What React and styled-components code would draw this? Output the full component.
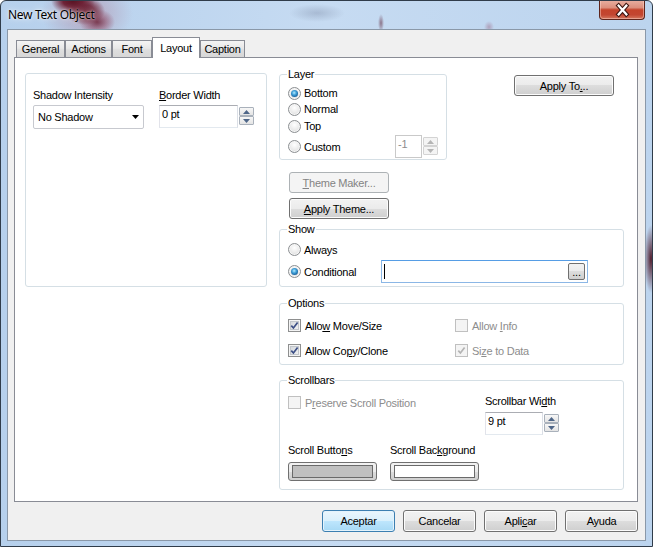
import React from 'react';
import styled, { createGlobalStyle, css } from 'styled-components';

const Global = createGlobalStyle`
  html, body { margin: 0; padding: 0; }
  body {
    width: 653px;
    height: 547px;
    overflow: hidden;
    font-family: "Liberation Sans", Arial, sans-serif;
    font-size: 11px;
    letter-spacing: -0.25px;
    color: #000;
  }
  * { box-sizing: border-box; }
`;

const tabs = [
    { label: 'General', w: 49 },
    { label: 'Actions', w: 47 },
    { label: 'Font', w: 40 },
    { label: 'Layout', w: 48 },
    { label: 'Caption', w: 45 },
];

function Spin({ value, width, disabled }) {
    return (
        <SpinBox>
            <SpinEdit $w={width} $disabled={disabled}>{value}</SpinEdit>
            <SpinButtons>
                <SpinButton $disabled={disabled}>
                    <svg width="7" height="4" viewBox="0 0 7 4"><polygon points="0,4 3.5,0 7,4" /></svg>
                </SpinButton>
                <SpinButton $disabled={disabled}>
                    <svg width="7" height="4" viewBox="0 0 7 4"><polygon points="0,0 7,0 3.5,4" /></svg>
                </SpinButton>
            </SpinButtons>
        </SpinBox>
    );
}

function Check({ checked, disabled, children }) {
    return (
        <Option $h={17}>
            <CheckBox $disabled={disabled}>
                {checked && (
                    <svg width="11" height="11" viewBox="0 0 11 11">
                        <path d="M2.3 5.6 L4.4 8 L8.6 2.4" fill="none" strokeWidth="1.7" stroke={disabled ? '#b4b4b4' : '#3c4f86'} />
                    </svg>
                )}
            </CheckBox>
            <OptionText $disabled={disabled}>{children}</OptionText>
        </Option>
    );
}

export default function App() {
    return (
        <>
            <Global />
            <Window>
                <TitleBar>
                    <Title>New Text Object</Title>
                    <CloseButton aria-label="Close">
                        <svg width="46" height="20" viewBox="0 0 46 20">
                            <path d="M19.5 5.5 L27.5 14.5 M27.5 5.5 L19.5 14.5" stroke="#3d1611" strokeWidth="4.6" strokeLinecap="square" fill="none" />
                            <path d="M19.5 5.5 L27.5 14.5 M27.5 5.5 L19.5 14.5" stroke="#fff" strokeWidth="2.4" strokeLinecap="square" fill="none" />
                        </svg>
                    </CloseButton>
                </TitleBar>
                <Client>
                    <TabStrip>
                        {tabs.map((t) => (
                            <Tab key={t.label} $w={t.w} $active={t.label === 'Layout'}>{t.label}</Tab>
                        ))}
                    </TabStrip>
                    <Page>
                        <PlainGroup>
                            <FieldRow>
                                <Field>
                                    <FieldLabel>Shadow Intensity</FieldLabel>
                                    <Combo>
                                        No Shadow
                                        <svg width="7" height="4" viewBox="0 0 7 4"><polygon points="0,0 7,0 3.5,4" fill="#000" /></svg>
                                    </Combo>
                                </Field>
                                <Field>
                                    <FieldLabel><Key>B</Key>order Width</FieldLabel>
                                    <Spin value="0 pt" width={79} />
                                </Field>
                            </FieldRow>
                        </PlainGroup>

                        <RightColumn>
                            <TopRow>
                                <Group $w={168} $pt={4} $pb={1}>
                                    <Legend>Layer</Legend>
                                    <Option $h={16}><Radio $checked />Bottom</Option>
                                    <Option $h={16}><Radio />Normal</Option>
                                    <Option $h={18}><Radio />Top</Option>
                                    <Option $h={23}>
                                        <OptionLabel $w={107}><Radio />Custom</OptionLabel>
                                        <Spin value="-1" width={27} disabled />
                                    </Option>
                                </Group>
                                <ApplyTo>Apply To<Key>.</Key>..</ApplyTo>
                            </TopRow>

                            <ThemeButtons>
                                <Button $w={100} $h={21} disabled><Key>T</Key>heme Maker...</Button>
                                <Button $w={100} $h={21}><Key>A</Key>pply Theme...</Button>
                            </ThemeButtons>

                            <Group $mt={4} $pt={5} $pb={3}>
                                <Legend>Show</Legend>
                                <Option $h={17}><Radio />Always</Option>
                                <Option $h={23} $mt={2}>
                                    <OptionLabel $w={93}><Radio $checked />Conditional</OptionLabel>
                                    <ExprEdit>
                                        <Caret />
                                        <Ellipsis>...</Ellipsis>
                                    </ExprEdit>
                                </Option>
                            </Group>

                            <Group $mt={10} $pt={7} $pb={5}>
                                <Legend>Options</Legend>
                                <OptionsGrid>
                                    <Check checked>Allo<Key>w</Key> Move/Size</Check>
                                    <Check disabled>Allow <Key>I</Key>nfo</Check>
                                    <Check checked>Allow Co<Key>p</Key>y/Clone</Check>
                                    <Check checked disabled>Si<Key>z</Key>e to Data</Check>
                                </OptionsGrid>
                            </Group>

                            <Group $mt={9} $pt={7} $pb={8}>
                                <Legend>Scrollbars</Legend>
                                <ScrollTop>
                                    <Check disabled>P<Key>r</Key>eserve Scroll Position</Check>
                                    <Field>
                                        <FieldLabel $lh={15}>Scrollbar Wi<Key>d</Key>th</FieldLabel>
                                        <Spin value="9 pt" width={58} />
                                    </Field>
                                </ScrollTop>
                                <ScrollColors>
                                    <Field>
                                        <FieldLabel $gap={5}>Scroll Butto<Key>n</Key>s</FieldLabel>
                                        <Swatch><SwatchFill $color="#c0c0c0" /></Swatch>
                                    </Field>
                                    <Field>
                                        <FieldLabel $gap={5}>Scroll Bac<Key>k</Key>ground</FieldLabel>
                                        <Swatch><SwatchFill $color="#ffffff" /></Swatch>
                                    </Field>
                                </ScrollColors>
                            </Group>
                        </RightColumn>
                    </Page>

                    <Footer>
                        <Button $default>Aceptar</Button>
                        <Button>Cancelar</Button>
                        <Button>Apli<Key>c</Key>ar</Button>
                        <Button>Ayuda</Button>
                    </Footer>
                </Client>
            </Window>
        </>
    );
}

const Window = styled.div`
    width: 653px;
    height: 547px;
    display: flex;
    flex-direction: column;
    border: 1px solid #303c4a;
    border-radius: 6px 6px 0 0;
    overflow: hidden;
    background:
        radial-gradient(ellipse 22px 14px at 72px 0px, #5a1424 0%, #6e2236 45%, rgba(120, 45, 65, 0) 100%),
        radial-gradient(ellipse 20px 14px at 84px 10px, #6a1d31 0%, rgba(110, 35, 55, 0.85) 45%, rgba(140, 60, 85, 0) 100%),
        radial-gradient(ellipse 18px 13px at 96px 21px, rgba(110, 36, 58, 0.85) 0%, rgba(140, 65, 90, 0.5) 50%, rgba(160, 90, 115, 0) 100%),
        radial-gradient(ellipse 46px 34px at 86px 12px, rgba(170, 100, 125, 0.45), rgba(170, 100, 125, 0) 100%),
        radial-gradient(ellipse 28px 9px at 316px 12px, rgba(80, 90, 120, 0.25), transparent),
        radial-gradient(ellipse 3px 9px at 380px 22px, rgba(90, 30, 50, 0.55), transparent),
        radial-gradient(ellipse 5px 6px at 488px 26px, rgba(140, 60, 90, 0.35), transparent),
        radial-gradient(ellipse 7px 34px at 650px 258px, rgba(75, 20, 35, 0.95), transparent),
        linear-gradient(90deg, #b6d0ec 0%, #c6dbf2 50%, #bcd4ee 100%);
`;

const TitleBar = styled.div`
    height: 28px;
    display: flex;
    align-items: flex-start;
    justify-content: space-between;
`;

const Title = styled.div`
    padding-left: 7px;
    line-height: 28px;
    font-family: "Noto Sans", "Open Sans", sans-serif;
    font-size: 12px;
    letter-spacing: -0.3px;
    text-shadow: 0 0 6px rgba(255, 255, 255, 0.9), 0 0 2px rgba(255, 255, 255, 0.9);
`;

const CloseButton = styled.div`
    width: 46px;
    height: 20px;
    margin: -1px 7px 0 0;
    border: 1px solid #5e251c;
    border-top: none;
    border-radius: 0 0 4px 4px;
    background: linear-gradient(#e9b0a2 0%, #dc8f7d 40%, #c4432b 52%, #c24631 78%, #d4785f 100%);
    box-shadow: inset 0 0 0 1px rgba(255, 220, 210, 0.45);
    display: flex;
`;

const Client = styled.div`
    flex: 1;
    margin: 0 6px 5px 6px;
    border: 1px solid #8a98a8;
    background: #f0f0f0;
    padding: 7px 7px 0 6px;
    display: flex;
    flex-direction: column;
`;

const TabStrip = styled.div`
    height: 20px;
    display: flex;
    align-items: flex-end;
    padding-left: 2px;
    position: relative;
    z-index: 1;
`;

const Tab = styled.div`
    width: ${(p) => p.$w}px;
    height: ${(p) => (p.$active ? 21 : 17)}px;
    margin-bottom: ${(p) => (p.$active ? -1 : 0)}px;
    border: 1px solid #898c95;
    border-bottom: none;
    background: ${(p) => (p.$active ? '#fff' : 'linear-gradient(#f4f4f4, #e8e8e8 45%, #dedede 55%, #d7d7d7)')};
    display: flex;
    align-items: center;
    justify-content: center;
`;

const Page = styled.div`
    height: 445px;
    border: 1px solid #898c95;
    background: #fff;
    padding: 10px 0 0 10px;
    display: flex;
    align-items: flex-start;
    gap: 12px;
`;

const PlainGroup = styled.div`
    width: 242px;
    height: 214px;
    margin-top: 5px;
    border: 1px solid #d5dfe5;
    border-radius: 3px;
    padding: 15px 0 0 7px;
`;

const FieldRow = styled.div`
    display: flex;
    gap: 15px;
`;

const Field = styled.div`
    display: flex;
    flex-direction: column;
    align-items: flex-start;
`;

const FieldLabel = styled.div`
    line-height: ${(p) => p.$lh || 13}px;
    margin-bottom: ${(p) => p.$gap || 3}px;
    white-space: nowrap;
`;

const Key = styled.u`
    text-decoration: underline;
    text-underline-offset: 1px;
`;

const Combo = styled.div`
    width: 111px;
    height: 24px;
    border: 1px solid #c7c9cf;
    border-radius: 2px;
    background: #fff;
    padding: 0 4px 0 4px;
    display: flex;
    align-items: center;
    justify-content: space-between;
`;

const SpinBox = styled.div`
    display: flex;
    align-items: flex-start;
`;

const SpinEdit = styled.div`
    width: ${(p) => p.$w}px;
    height: 23px;
    border: 1px solid;
    border-color: #abadb3 #dbdfe6 #e3e9ef #e2e3ea;
    background: #fff;
    padding: 2px 0 0 2px;
    line-height: 13px;
    color: ${(p) => (p.$disabled ? '#8d8d8d' : '#000')};
    ${(p) => p.$disabled && css`border-color: #c9c9c9;`}
`;

const SpinButtons = styled.div`
    display: flex;
    flex-direction: column;
    margin: 2px 0 0 1px;
`;

const SpinButton = styled.div`
    width: 15px;
    height: 9px;
    border: 1px solid ${(p) => (p.$disabled ? '#d3d3d3' : '#a9b1bb')};
    border-radius: 1px;
    background: ${(p) => (p.$disabled ? '#f4f4f4' : 'linear-gradient(#f7f7f7, #e4e4e4)')};
    display: flex;
    align-items: center;
    justify-content: center;
    svg { fill: ${(p) => (p.$disabled ? '#b5b5b5' : '#4e6688')}; }
`;

const RightColumn = styled.div`
    width: 345px;
    display: flex;
    flex-direction: column;
`;

const TopRow = styled.div`
    display: flex;
    align-items: flex-start;
`;

const Group = styled.fieldset`
    margin: ${(p) => p.$mt || 0}px 0 0 0;
    width: ${(p) => (p.$w ? `${p.$w}px` : 'auto')};
    min-width: 0;
    padding: ${(p) => p.$pt}px 8px ${(p) => p.$pb}px 8px;
    border: 1px solid #d5dfe5;
    border-radius: 3px;
    display: flex;
    flex-direction: column;
`;

const Legend = styled.legend`
    padding: 0 1px;
    margin-left: -1px;
    line-height: 13px;
`;

const Option = styled.label`
    height: ${(p) => p.$h}px;
    margin-top: ${(p) => p.$mt || 0}px;
    display: flex;
    align-items: center;
    white-space: nowrap;
`;

const OptionLabel = styled.span`
    width: ${(p) => p.$w}px;
    display: flex;
    align-items: center;
`;

const OptionText = styled.span`
    color: ${(p) => (p.$disabled ? '#8d8d8d' : '#000')};
`;

const Radio = styled.span`
    position: relative;
    width: 13px;
    height: 13px;
    margin-right: 3px;
    flex: none;
    border-radius: 50%;
    border: 1px solid #8c8f92;
    background: radial-gradient(circle at 50% 35%, #ffffff 0%, #eaeaea 55%, #cfd1d3 100%);
    box-shadow: inset 0 0 0 1px #f6f6f6;
    ${(p) => p.$checked && css`
        &::after {
            content: '';
            position: absolute;
            inset: 2px;
            border-radius: 50%;
            background: radial-gradient(circle at 45% 40%, #b8ecff 0%, #45a5dc 35%, #155f9b 75%, #0e3f6c 100%);
        }
    `}
`;

const CheckBox = styled.span`
    width: 13px;
    height: 13px;
    margin-right: 4px;
    flex: none;
    border: 1px solid ${(p) => (p.$disabled ? '#c0c0c0' : '#8e8f8f')};
    background: ${(p) => (p.$disabled ? '#f4f4f4' : 'linear-gradient(135deg, #cfd3d8, #f6f6f6)')};
    box-shadow: ${(p) => (p.$disabled ? 'none' : 'inset 0 0 0 1px #f4f4f4, inset 0 0 0 2px #c2c6cb')};
    display: flex;
    align-items: center;
    justify-content: center;
`;

const Button = styled.button`
    width: ${(p) => p.$w || 73}px;
    height: ${(p) => p.$h || 22}px;
    padding: 0;
    font: inherit;
    letter-spacing: inherit;
    color: #000;
    border: 1px solid #707070;
    border-radius: 3px;
    background: linear-gradient(#f2f2f2, #ebebeb 50%, #dddddd 50%, #cfcfcf);
    box-shadow: inset 0 0 0 1px #fcfcfc;
    ${(p) => p.$default && css`
        border-color: #3c7fb1;
        background: linear-gradient(#eaf6fd, #d9f0fc 50%, #bee6fd 50%, #a7d9f5);
        box-shadow: inset 0 0 0 1px #e4f3fc;
    `}
    &:disabled {
        border-color: #adb2b5;
        background: #f4f4f4;
        color: #838383;
        box-shadow: none;
    }
`;

const ApplyTo = styled(Button).attrs({ $w: 100, $h: 21 })`
    margin: 7px 0 0 67px;
`;

const ThemeButtons = styled.div`
    display: flex;
    flex-direction: column;
    gap: 5px;
    margin-top: 12px;
    padding-left: 10px;
`;

const ExprEdit = styled.div`
    width: 207px;
    height: 23px;
    border: 1px solid #8bb7e6;
    border-top-color: #569de5;
    background: #fff;
    display: flex;
    align-items: center;
    justify-content: space-between;
    padding: 0 2px 0 2px;
`;

const Caret = styled.span`
    width: 1px;
    height: 15px;
    background: #000;
`;

const Ellipsis = styled.span`
    width: 17px;
    height: 17px;
    border: 1px solid #707070;
    border-radius: 2px;
    background: linear-gradient(#f2f2f2, #ebebeb 50%, #dddddd 50%, #cfcfcf);
    display: flex;
    align-items: flex-end;
    justify-content: center;
    line-height: 12px;
    padding-bottom: 1px;
`;

const OptionsGrid = styled.div`
    display: grid;
    grid-template-columns: 167px 1fr;
    row-gap: 8px;
`;

const ScrollTop = styled.div`
    display: grid;
    grid-template-columns: 197px auto;
    align-items: start;
`;

const ScrollColors = styled.div`
    display: grid;
    grid-template-columns: 102px auto;
    margin-top: 9px;
`;

const Swatch = styled.div`
    width: 89px;
    height: 19px;
    border: 1px solid #707070;
    border-radius: 3px;
    background: linear-gradient(#f2f2f2, #ebebeb 50%, #dddddd 50%, #cfcfcf);
    padding: 2px 3px;
    display: flex;
`;

const SwatchFill = styled.div`
    flex: 1;
    border: 1px solid #6a6a6a;
    background: ${(p) => p.$color};
`;

const Footer = styled.div`
    display: flex;
    justify-content: flex-end;
    gap: 8px;
    margin: 8px 0 0 0;
`;
